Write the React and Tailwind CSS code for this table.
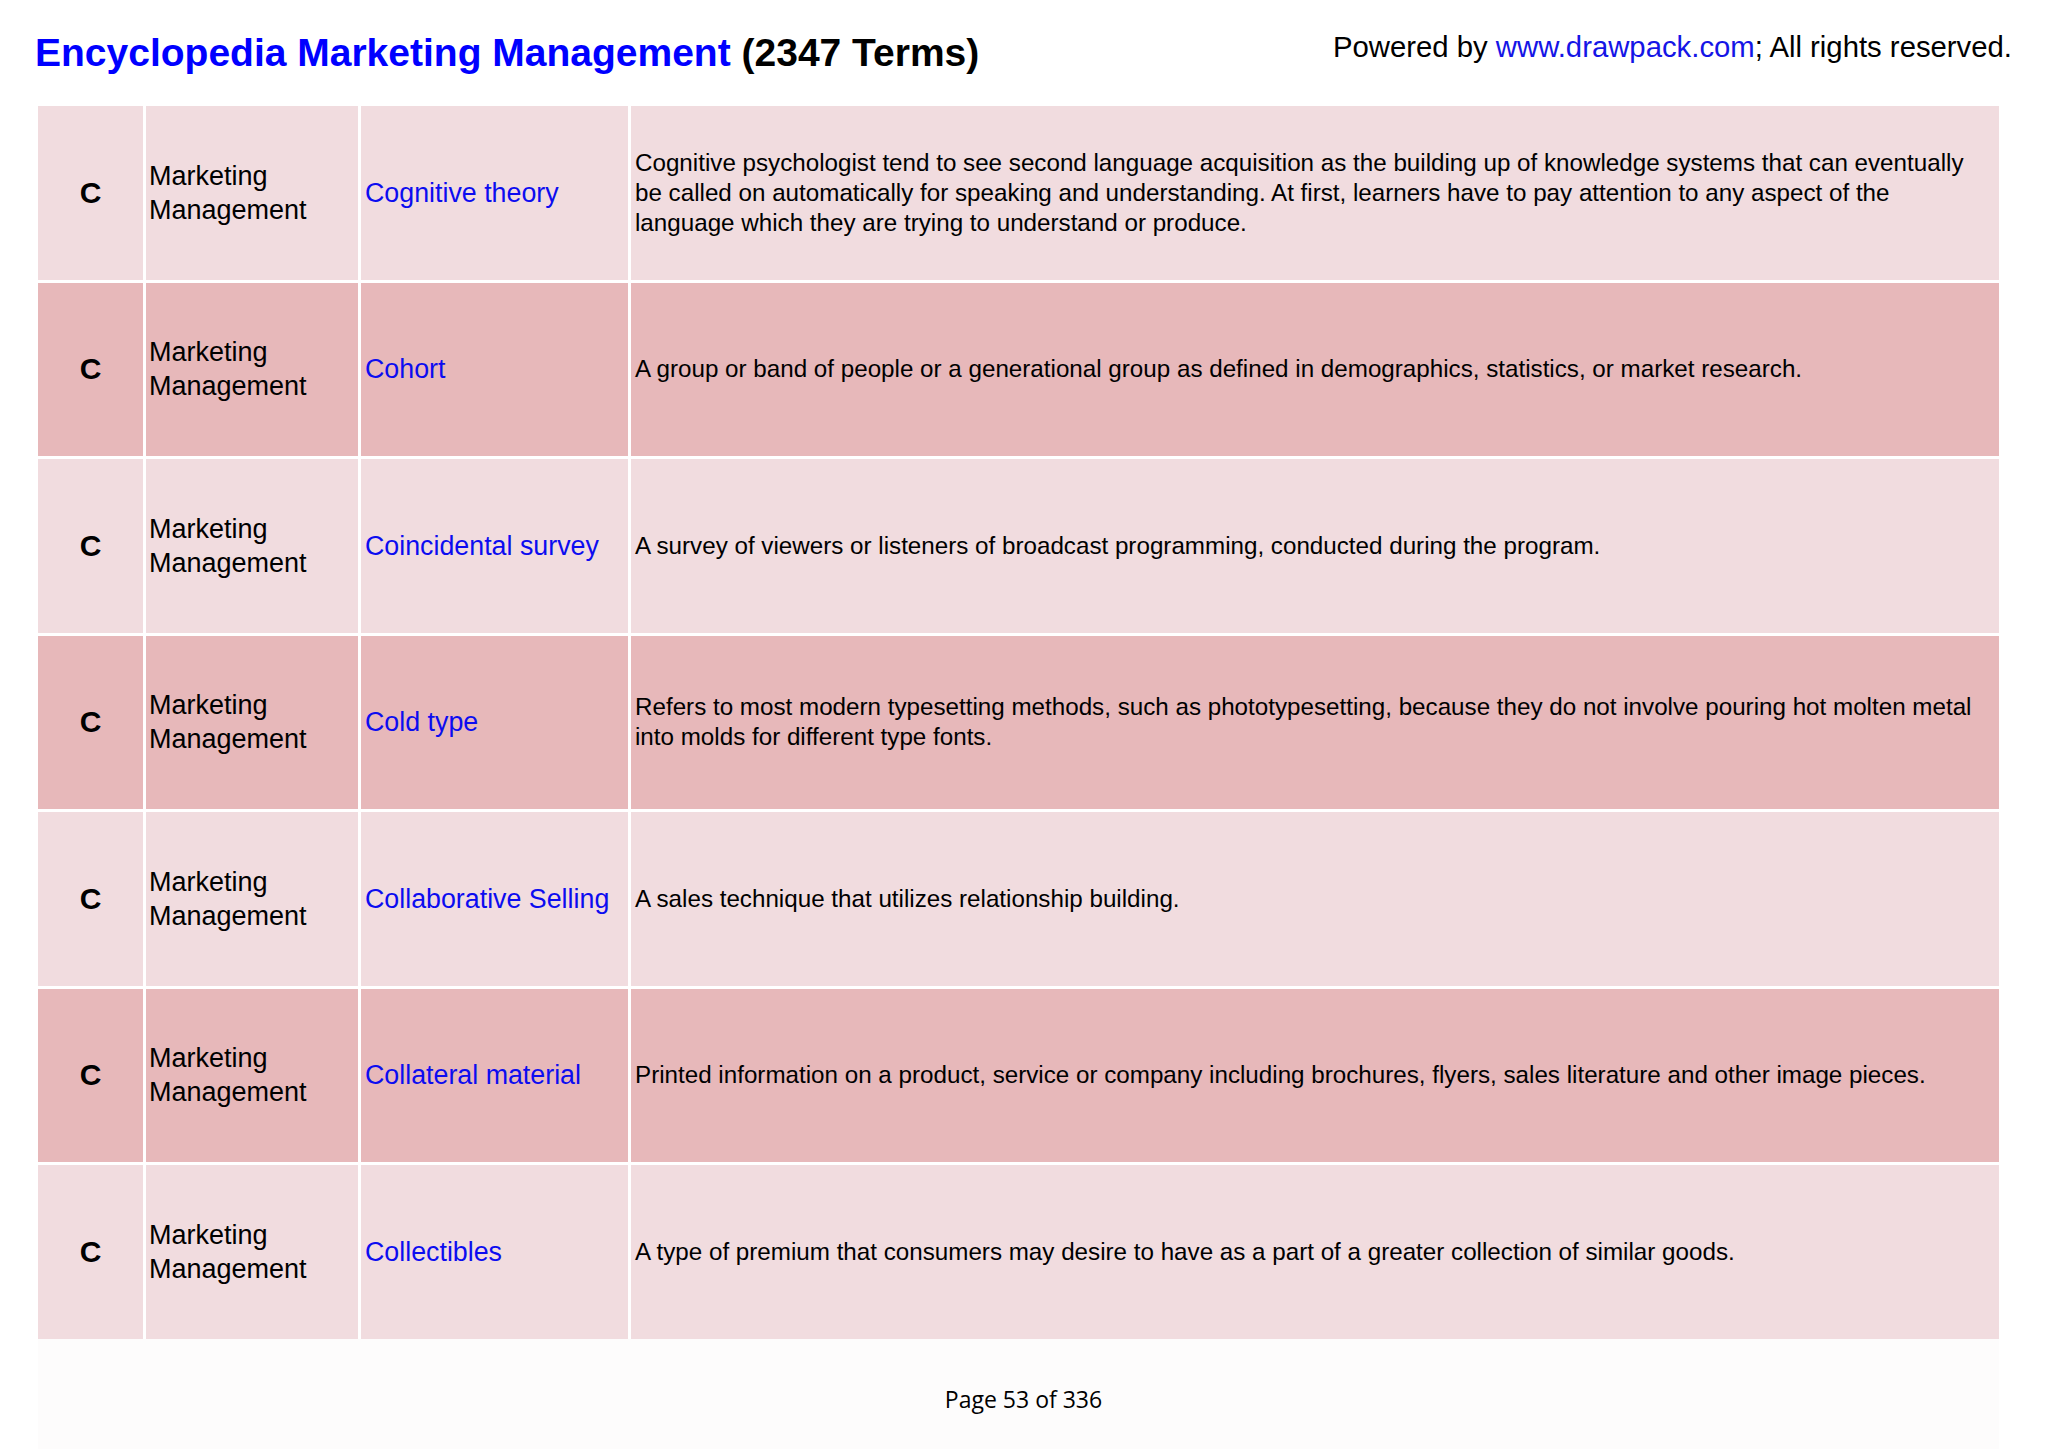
const rows = [
  {
    term: "Cognitive theory",
    desc: "Cognitive psychologist tend to see second language acquisition as the building up of knowledge systems that can eventually be called on automatically for speaking and understanding. At first, learners have to pay attention to any aspect of the language which they are trying to understand or produce.",
    dark: false,
  },
  {
    term: "Cohort",
    desc: "A group or band of people or a generational group as defined in demographics, statistics, or market research.",
    dark: true,
  },
  {
    term: "Coincidental survey",
    desc: "A survey of viewers or listeners of broadcast programming, conducted during the program.",
    dark: false,
  },
  {
    term: "Cold type",
    desc: "Refers to most modern typesetting methods, such as phototypesetting, because they do not involve pouring hot molten metal into molds for different type fonts.",
    dark: true,
  },
  {
    term: "Collaborative Selling",
    desc: "A sales technique that utilizes relationship building.",
    dark: false,
  },
  {
    term: "Collateral material",
    desc: "Printed information on a product, service or company including brochures, flyers, sales literature and other image pieces.",
    dark: true,
  },
  {
    term: "Collectibles",
    desc: "A type of premium that consumers may desire to have as a part of a greater collection of similar goods.",
    dark: false,
  },
];

function Row({ term, desc, dark }) {
  const bg = dark ? "bg-[#e7b8ba]" : "bg-[#f1dcdf]";
  return (
    <>
      <div className={`${bg} h-[173.5px] flex items-center justify-center`}>
        <span className="text-[30px] font-bold text-black leading-none">C</span>
      </div>
      <div className={`${bg} h-[173.5px] flex items-center pl-[3px]`}>
        <span className="text-[27px] leading-[34px] text-black">Marketing Management</span>
      </div>
      <div className={`${bg} h-[173.5px] flex items-center pl-[4px]`}>
        <span className="text-[26.8px] leading-[34px] text-[#0c0cf0]">{term}</span>
      </div>
      <div className={`${bg} h-[173.5px] flex items-center pl-[4px] pr-[16px]`}>
        <p className="text-[24.2px] leading-[30px] text-black">{desc}</p>
      </div>
    </>
  );
}

export default function App() {
  return (
    <div
      className="w-[2048px] h-[1449px] bg-white relative overflow-hidden"
      style={{ fontFamily: '"Liberation Sans", Arial, sans-serif' }}
    >
      <div className="h-[106px] flex justify-between items-start pl-[35px] pr-[36px] pt-[33px]">
        <h1 className="text-[39px] font-bold leading-none whitespace-nowrap">
          <span className="text-[#0000ff]">Encyclopedia Marketing Management</span>
          <span className="text-black"> (2347 Terms)</span>
        </h1>
        <div className="text-[29.3px] leading-none -mt-[1px] text-black whitespace-nowrap">
          Powered by <span className="text-[#1515e6]">www.drawpack.com</span>; All rights reserved.
        </div>
      </div>

      <div className="ml-[38px] w-[1961px] grid grid-cols-[105px_212px_267px_1368px] gap-[3px] bg-white">
        {rows.map((r, i) => (
          <Row key={i} {...r} />
        ))}
      </div>

      <div className="ml-[38px] w-[1961px] h-[114px] bg-[#fdfcfc] flex justify-center pt-[49px]">
        <div
          className="text-[23px] leading-none text-black relative left-[5px]"
          style={{ fontFamily: '"Open Sans", "Noto Sans", sans-serif' }}
        >
          Page 53 of 336
        </div>
      </div>
    </div>
  );
}
